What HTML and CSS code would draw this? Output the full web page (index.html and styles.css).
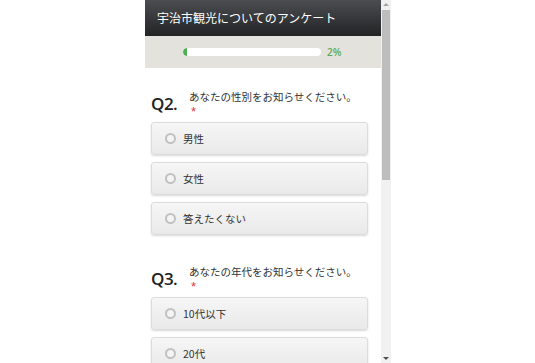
FILE: index.html
```html
<!DOCTYPE html>
<html lang="ja">
<head>
    <meta charset="UTF-8">
    <meta name="viewport" content="width=device-width, initial-scale=1.0">
    <title>宇治市観光についてのアンケート</title>
    <link rel="stylesheet" href="styles.css">
</head>
<body>
    <div class="phone">
        <div class="screen">
            <div class="header">宇治市観光についてのアンケート</div>
            <div class="progress-area">
                <div class="progress-bar">
                    <div class="progress" style="width: 3%"></div>
                </div>
                <span class="percent">2%</span>
            </div>

            <div class="question first">
                <div class="q-head">
                    <div class="q-num">Q2.</div>
                    <div class="q-body">
                        <div class="q-text">あなたの性別をお知らせください。</div>
                        <div class="required">*</div>
                    </div>
                </div>
                <div class="options">
                    <label class="option"><span class="radio"></span>男性</label>
                    <label class="option"><span class="radio"></span>女性</label>
                    <label class="option"><span class="radio"></span>答えたくない</label>
                </div>
            </div>

            <div class="question">
                <div class="q-head">
                    <div class="q-num">Q3.</div>
                    <div class="q-body">
                        <div class="q-text">あなたの年代をお知らせください。</div>
                        <div class="required">*</div>
                    </div>
                </div>
                <div class="options">
                    <label class="option"><span class="radio"></span>10代以下</label>
                    <label class="option"><span class="radio"></span>20代</label>
                </div>
            </div>
        </div>

        <div class="scrollbar">
            <div class="arrow up"></div>
            <div class="track">
                <div class="thumb"></div>
            </div>
            <div class="arrow down"></div>
        </div>
    </div>
</body>
</html>
```

FILE: styles.css
```css
body {
    margin: 0;
    background-color: white;
    font-family: "Noto Sans CJK JP", "Noto Sans", sans-serif;
    color: #333;
}
.phone {
    display: flex;
    margin-left: 145px;
    width: 246px;
    height: 363px;
    overflow: hidden;
}
.screen {
    width: 236px;
    flex-shrink: 0;
    background-color: white;
}
.header {
    height: 36px;
    line-height: 36px;
    padding-left: 12px;
    background: linear-gradient(#4b4d50, #222325);
    color: white;
    font-size: 12px;
}
.progress-area {
    display: flex;
    align-items: center;
    height: 32px;
    padding-left: 38px;
    background-color: #e4e2dd;
}
.progress-bar {
    width: 138px;
    height: 8px;
    background-color: white;
    border-radius: 4px;
    overflow: hidden;
}
.progress {
    height: 100%;
    background-color: #4caf50;
    border-radius: 4px 0 0 4px;
}
.percent {
    margin-left: 6px;
    color: #5aac5a;
    font-family: "Open Sans", sans-serif;
    font-weight: 600;
    font-size: 10px;
}
.question {
    margin-top: 30px;
}
.question.first {
    margin-top: 22px;
}
.q-head {
    display: flex;
    padding-left: 6px;
    margin-bottom: 6px;
}
.q-num {
    width: 38px;
    padding-top: 4px;
    font-family: "Open Sans", sans-serif;
    font-weight: 600;
    font-size: 17px;
    line-height: 20px;
    color: #222;
    letter-spacing: -0.5px;
}
.q-text {
    font-size: 10.5px;
    line-height: 14px;
    color: #333;
}
.required {
    height: 12px;
    padding-left: 2px;
    color: #e53935;
    font-family: "Liberation Sans", sans-serif;
    font-size: 13px;
    line-height: 15px;
}
.options {
    display: flex;
    flex-direction: column;
    gap: 7px;
    padding-left: 6px;
    width: 217px;
}
.option {
    display: flex;
    align-items: center;
    height: 31px;
    padding-left: 13px;
    border: 1px solid #dcdcdc;
    border-radius: 3px;
    background: linear-gradient(#f6f6f6, #e9e9e9);
    box-shadow: 0 1px 2px rgba(0,0,0,0.15);
    font-size: 10.5px;
    color: #333;
}
.radio {
    width: 7px;
    height: 7px;
    margin-right: 7px;
    border: 2px solid #bfc1c3;
    border-radius: 50%;
    background-color: #f4f4f4;
}
.scrollbar {
    display: flex;
    flex-direction: column;
    width: 10px;
    background-color: #f1f1f1;
}
.arrow {
    height: 9px;
    display: flex;
    justify-content: center;
    align-items: center;
}
.arrow::before {
    content: "";
    border-left: 3px solid transparent;
    border-right: 3px solid transparent;
}
.arrow.up::before {
    border-bottom: 3px solid #a3a3a3;
}
.arrow.down::before {
    border-top: 3px solid #505050;
}
.track {
    flex: 1;
    padding: 1px 1px;
}
.thumb {
    height: 170px;
    background-color: #bdbdbd;
}
```
